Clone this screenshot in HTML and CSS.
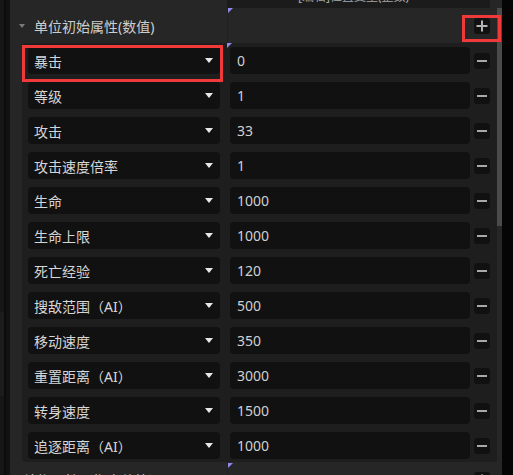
FILE: index.html
```html
<!DOCTYPE html>
<html lang="zh-CN">
<head>
    <meta charset="UTF-8">
    <title>单位初始属性</title>
    <link rel="stylesheet" href="styles.css">
</head>
<body>
    <div class="app">
        <div class="side"><div class="side-mark"></div></div>
        <div class="panel">
            <div class="content">
                <div class="top-strip">
                    <div class="strip-left"></div>
                    <div class="strip-right"><span>[编辑]位置变量(整数)</span></div>
                </div>
                <div class="section-head">
                    <div class="head-left"><span class="caret"></span><span class="head-title">单位初始属性(数值)</span></div>
                    <div class="head-right">
                        <i class="corner"></i>
                        <div class="icon-btn"><svg width="16" height="16" viewBox="0 0 16 16"><path d="M2.5 8h11M8 2.5v11" stroke="#b4b4b4" stroke-width="2"/></svg></div>
                    </div>
                </div>
                <div class="list">
                    <i class="corner list-corner"></i>
                    <div class="row"><div class="select"><span>暴击</span><i class="arrow"></i></div><div class="value">0</div><div class="icon-btn"><svg width="16" height="16" viewBox="0 0 16 16"><path d="M3 8h10" stroke="#a8a8a8" stroke-width="2"/></svg></div></div>
                    <div class="row"><div class="select"><span>等级</span><i class="arrow"></i></div><div class="value">1</div><div class="icon-btn"><svg width="16" height="16" viewBox="0 0 16 16"><path d="M3 8h10" stroke="#a8a8a8" stroke-width="2"/></svg></div></div>
                    <div class="row"><div class="select"><span>攻击</span><i class="arrow"></i></div><div class="value">33</div><div class="icon-btn"><svg width="16" height="16" viewBox="0 0 16 16"><path d="M3 8h10" stroke="#a8a8a8" stroke-width="2"/></svg></div></div>
                    <div class="row"><div class="select"><span>攻击速度倍率</span><i class="arrow"></i></div><div class="value">1</div><div class="icon-btn"><svg width="16" height="16" viewBox="0 0 16 16"><path d="M3 8h10" stroke="#a8a8a8" stroke-width="2"/></svg></div></div>
                    <div class="row"><div class="select"><span>生命</span><i class="arrow"></i></div><div class="value">1000</div><div class="icon-btn"><svg width="16" height="16" viewBox="0 0 16 16"><path d="M3 8h10" stroke="#a8a8a8" stroke-width="2"/></svg></div></div>
                    <div class="row"><div class="select"><span>生命上限</span><i class="arrow"></i></div><div class="value">1000</div><div class="icon-btn"><svg width="16" height="16" viewBox="0 0 16 16"><path d="M3 8h10" stroke="#a8a8a8" stroke-width="2"/></svg></div></div>
                    <div class="row"><div class="select"><span>死亡经验</span><i class="arrow"></i></div><div class="value">120</div><div class="icon-btn"><svg width="16" height="16" viewBox="0 0 16 16"><path d="M3 8h10" stroke="#a8a8a8" stroke-width="2"/></svg></div></div>
                    <div class="row"><div class="select"><span>搜敌范围（AI）</span><i class="arrow"></i></div><div class="value">500</div><div class="icon-btn"><svg width="16" height="16" viewBox="0 0 16 16"><path d="M3 8h10" stroke="#a8a8a8" stroke-width="2"/></svg></div></div>
                    <div class="row"><div class="select"><span>移动速度</span><i class="arrow"></i></div><div class="value">350</div><div class="icon-btn"><svg width="16" height="16" viewBox="0 0 16 16"><path d="M3 8h10" stroke="#a8a8a8" stroke-width="2"/></svg></div></div>
                    <div class="row"><div class="select"><span>重置距离（AI）</span><i class="arrow"></i></div><div class="value">3000</div><div class="icon-btn"><svg width="16" height="16" viewBox="0 0 16 16"><path d="M3 8h10" stroke="#a8a8a8" stroke-width="2"/></svg></div></div>
                    <div class="row"><div class="select"><span>转身速度</span><i class="arrow"></i></div><div class="value">1500</div><div class="icon-btn"><svg width="16" height="16" viewBox="0 0 16 16"><path d="M3 8h10" stroke="#a8a8a8" stroke-width="2"/></svg></div></div>
                    <div class="row"><div class="select"><span>追逐距离（AI）</span><i class="arrow"></i></div><div class="value">1000</div><div class="icon-btn"><svg width="16" height="16" viewBox="0 0 16 16"><path d="M3 8h10" stroke="#a8a8a8" stroke-width="2"/></svg></div></div>
                </div>
                <div class="section-head next">
                    <div class="head-left"><span class="head-title">结构属性（指定值等）</span></div>
                    <div class="head-right">
                        <i class="corner"></i>
                        <div class="icon-btn"><svg width="16" height="16" viewBox="0 0 16 16"><path d="M2.5 8h11M8 2.5v11" stroke="#b4b4b4" stroke-width="2"/></svg></div>
                    </div>
                </div>
            </div>
            <div class="scroll"><div class="thumb"></div></div>
        </div>
        <div class="edge"></div>
    </div>
    <div class="mark mark-select"></div>
    <div class="mark mark-plus"></div>
</body>
</html>
```

FILE: styles.css
```css
body {
    margin: 0;
    width: 513px;
    height: 475px;
    overflow: hidden;
    background-color: #050505;
    font-family: "Noto Sans", "Noto Sans CJK SC", sans-serif;
    font-size: 14px;
    color: #d4d4d4;
    position: relative;
}
.app {
    display: flex;
    height: 475px;
}
.side {
    width: 10px;
    flex: none;
    background: linear-gradient(to right, #161616 0 4px, #0b0b0b 4px 6px, #121212 6px);
}
.side-mark {
    margin-top: 312px;
    width: 4px;
    height: 84px;
    background-color: #1c1c1c;
}
.panel {
    width: 492px;
    flex: none;
    display: flex;
    background-color: #262626;
}
.content {
    width: 487px;
    display: flex;
    flex-direction: column;
}
.scroll {
    width: 5px;
}
.thumb {
    margin-top: 8px;
    height: 218px;
    background-color: #4a4a4a;
}
.edge {
    flex: 1;
    background-color: #050505;
}

.top-strip {
    display: flex;
    height: 8px;
    flex: none;
}
.strip-left {
    width: 217px;
}
.strip-right {
    width: 263px;
    background-color: #1b1b1b;
    overflow: hidden;
    padding-left: 71px;
    box-sizing: border-box;
    font-size: 12px;
    line-height: 14px;
    color: #a8a8a8;
}
.strip-right span {
    display: block;
    margin-top: -10px;
}

.section-head {
    display: flex;
    height: 35px;
    flex: none;
}
.head-left {
    width: 217px;
    display: flex;
    align-items: center;
    padding-left: 9px;
    box-sizing: border-box;
}
.caret {
    width: 0;
    height: 0;
    border-left: 3.5px solid transparent;
    border-right: 3.5px solid transparent;
    border-top: 4px solid #7a7a7a;
    margin-right: 9px;
}
.head-title {
    color: #cdcdcd;
}
.section-head.next .head-left {
    padding-left: 13px;
}
.head-right {
    flex: 1;
    position: relative;
    display: flex;
    align-items: center;
    justify-content: flex-end;
    padding-right: 7px;
    border-left: 1px solid #202020;
}
.corner {
    position: absolute;
    top: 0;
    left: 0;
    width: 0;
    height: 0;
    border-top: 5px solid #8f8aea;
    border-right: 5px solid transparent;
}
.section-head.next .corner {
    top: 1px;
}

.list {
    position: relative;
    margin-left: 12px;
    background-color: #1e1e1e;
    border-radius: 4px 0 0 4px;
    padding: 4px 0 3px 6px;
    display: flex;
    flex-direction: column;
    gap: 8px;
    flex: none;
}
.list-corner {
    left: 205px;
}
.row {
    display: flex;
    align-items: center;
    height: 27px;
}
.select {
    width: 192px;
    height: 27px;
    background-color: #111111;
    border-radius: 4px;
    display: flex;
    align-items: center;
    justify-content: space-between;
    padding: 0 7px 0 6px;
    box-sizing: border-box;
    color: #d6d6d6;
}
.arrow {
    width: 0;
    height: 0;
    border-left: 4.5px solid transparent;
    border-right: 4.5px solid transparent;
    border-top: 5px solid #e8e8e8;
}
.value {
    width: 240px;
    height: 27px;
    margin-left: 10px;
    background-color: #111111;
    border-radius: 4px;
    display: flex;
    align-items: center;
    padding-left: 7px;
    box-sizing: border-box;
    color: #d0d0d0;
}
.icon-btn {
    width: 16px;
    height: 16px;
    background-color: #111111;
    border-radius: 3px;
    margin-left: 4px;
    display: flex;
}

.mark {
    position: absolute;
    border: 3px solid #f03a3a;
    box-sizing: border-box;
}
.mark-select {
    left: 22px;
    top: 45px;
    width: 201px;
    height: 37px;
}
.mark-plus {
    left: 462px;
    top: 15px;
    width: 39px;
    height: 27px;
}
```
